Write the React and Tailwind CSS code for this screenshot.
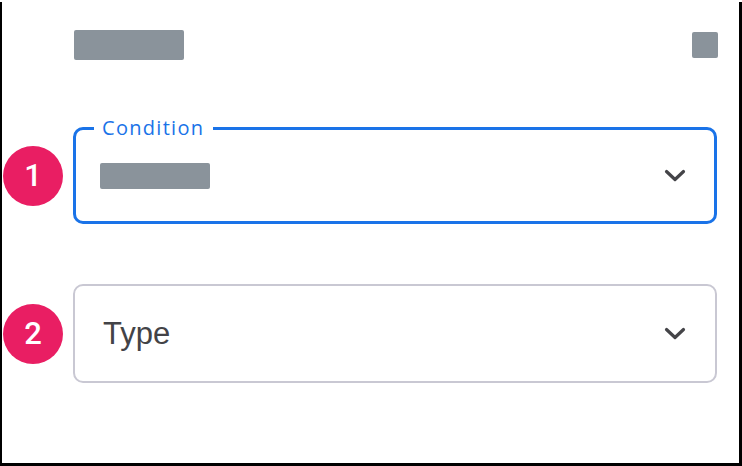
import React from "react";

function Chevron() {
  return (
    <svg width="22" height="14" viewBox="0 0 22 14" fill="none">
      <path d="M2.5 2.5 L11 10.5 L19.5 2.5" stroke="#444448" strokeWidth="3.2" strokeLinecap="round" strokeLinejoin="round" />
    </svg>
  );
}

function Badge({ n }) {
  return (
    <div className="w-[60px] h-[60px] shrink-0 rounded-full bg-[#e91e63] flex items-center justify-center text-white text-[31px] font-medium leading-none" style={{ fontFamily: "Roboto, 'Liberation Sans', sans-serif" }}>
      {n}
    </div>
  );
}

export default function App() {
  return (
    <div className="w-[742px] h-[466px] bg-black">
      <div className="ml-[2px] mt-[2px] w-[737px] h-[461px] bg-white flex flex-col" style={{ fontFamily: "'Liberation Sans', Arial, sans-serif" }}>
        <div className="flex items-start justify-between pl-[72px] pr-[21px] pt-[28px]">
          <div className="w-[110px] h-[30px] rounded-[2px] bg-[#8a939b]" />
          <div className="w-[26px] h-[26px] mt-[2px] rounded-[2px] bg-[#8a939b]" />
        </div>
        <div className="flex items-center gap-[10px] pl-[1px] mt-[67px]">
          <Badge n="1" />
          <div className="relative w-[644px] h-[97px] rounded-[10px] border-[3px] border-[#1a73e8] flex items-center justify-between pl-[24px] pr-[28px]">
            <span className="absolute left-[18px] top-[-15px] bg-white pl-[8px] pr-[9px] text-[#1a73e8] text-[20px] leading-[26px] tracking-[1.3px]" style={{ fontFamily: "'Open Sans', sans-serif" }}>Condition</span>
            <div className="w-[110px] h-[26px] rounded-[2px] bg-[#8a939b]" />
            <Chevron />
          </div>
        </div>
        <div className="flex items-center gap-[10px] pl-[1px] mt-[60px]">
          <Badge n="2" />
          <div className="w-[644px] h-[99px] rounded-[10px] border-[2px] border-[#c9c8d3] flex items-center justify-between pl-[28px] pr-[29px]">
            <span className="text-[#434347] text-[31px] leading-none">Type</span>
            <Chevron />
          </div>
        </div>
      </div>
    </div>
  );
}
